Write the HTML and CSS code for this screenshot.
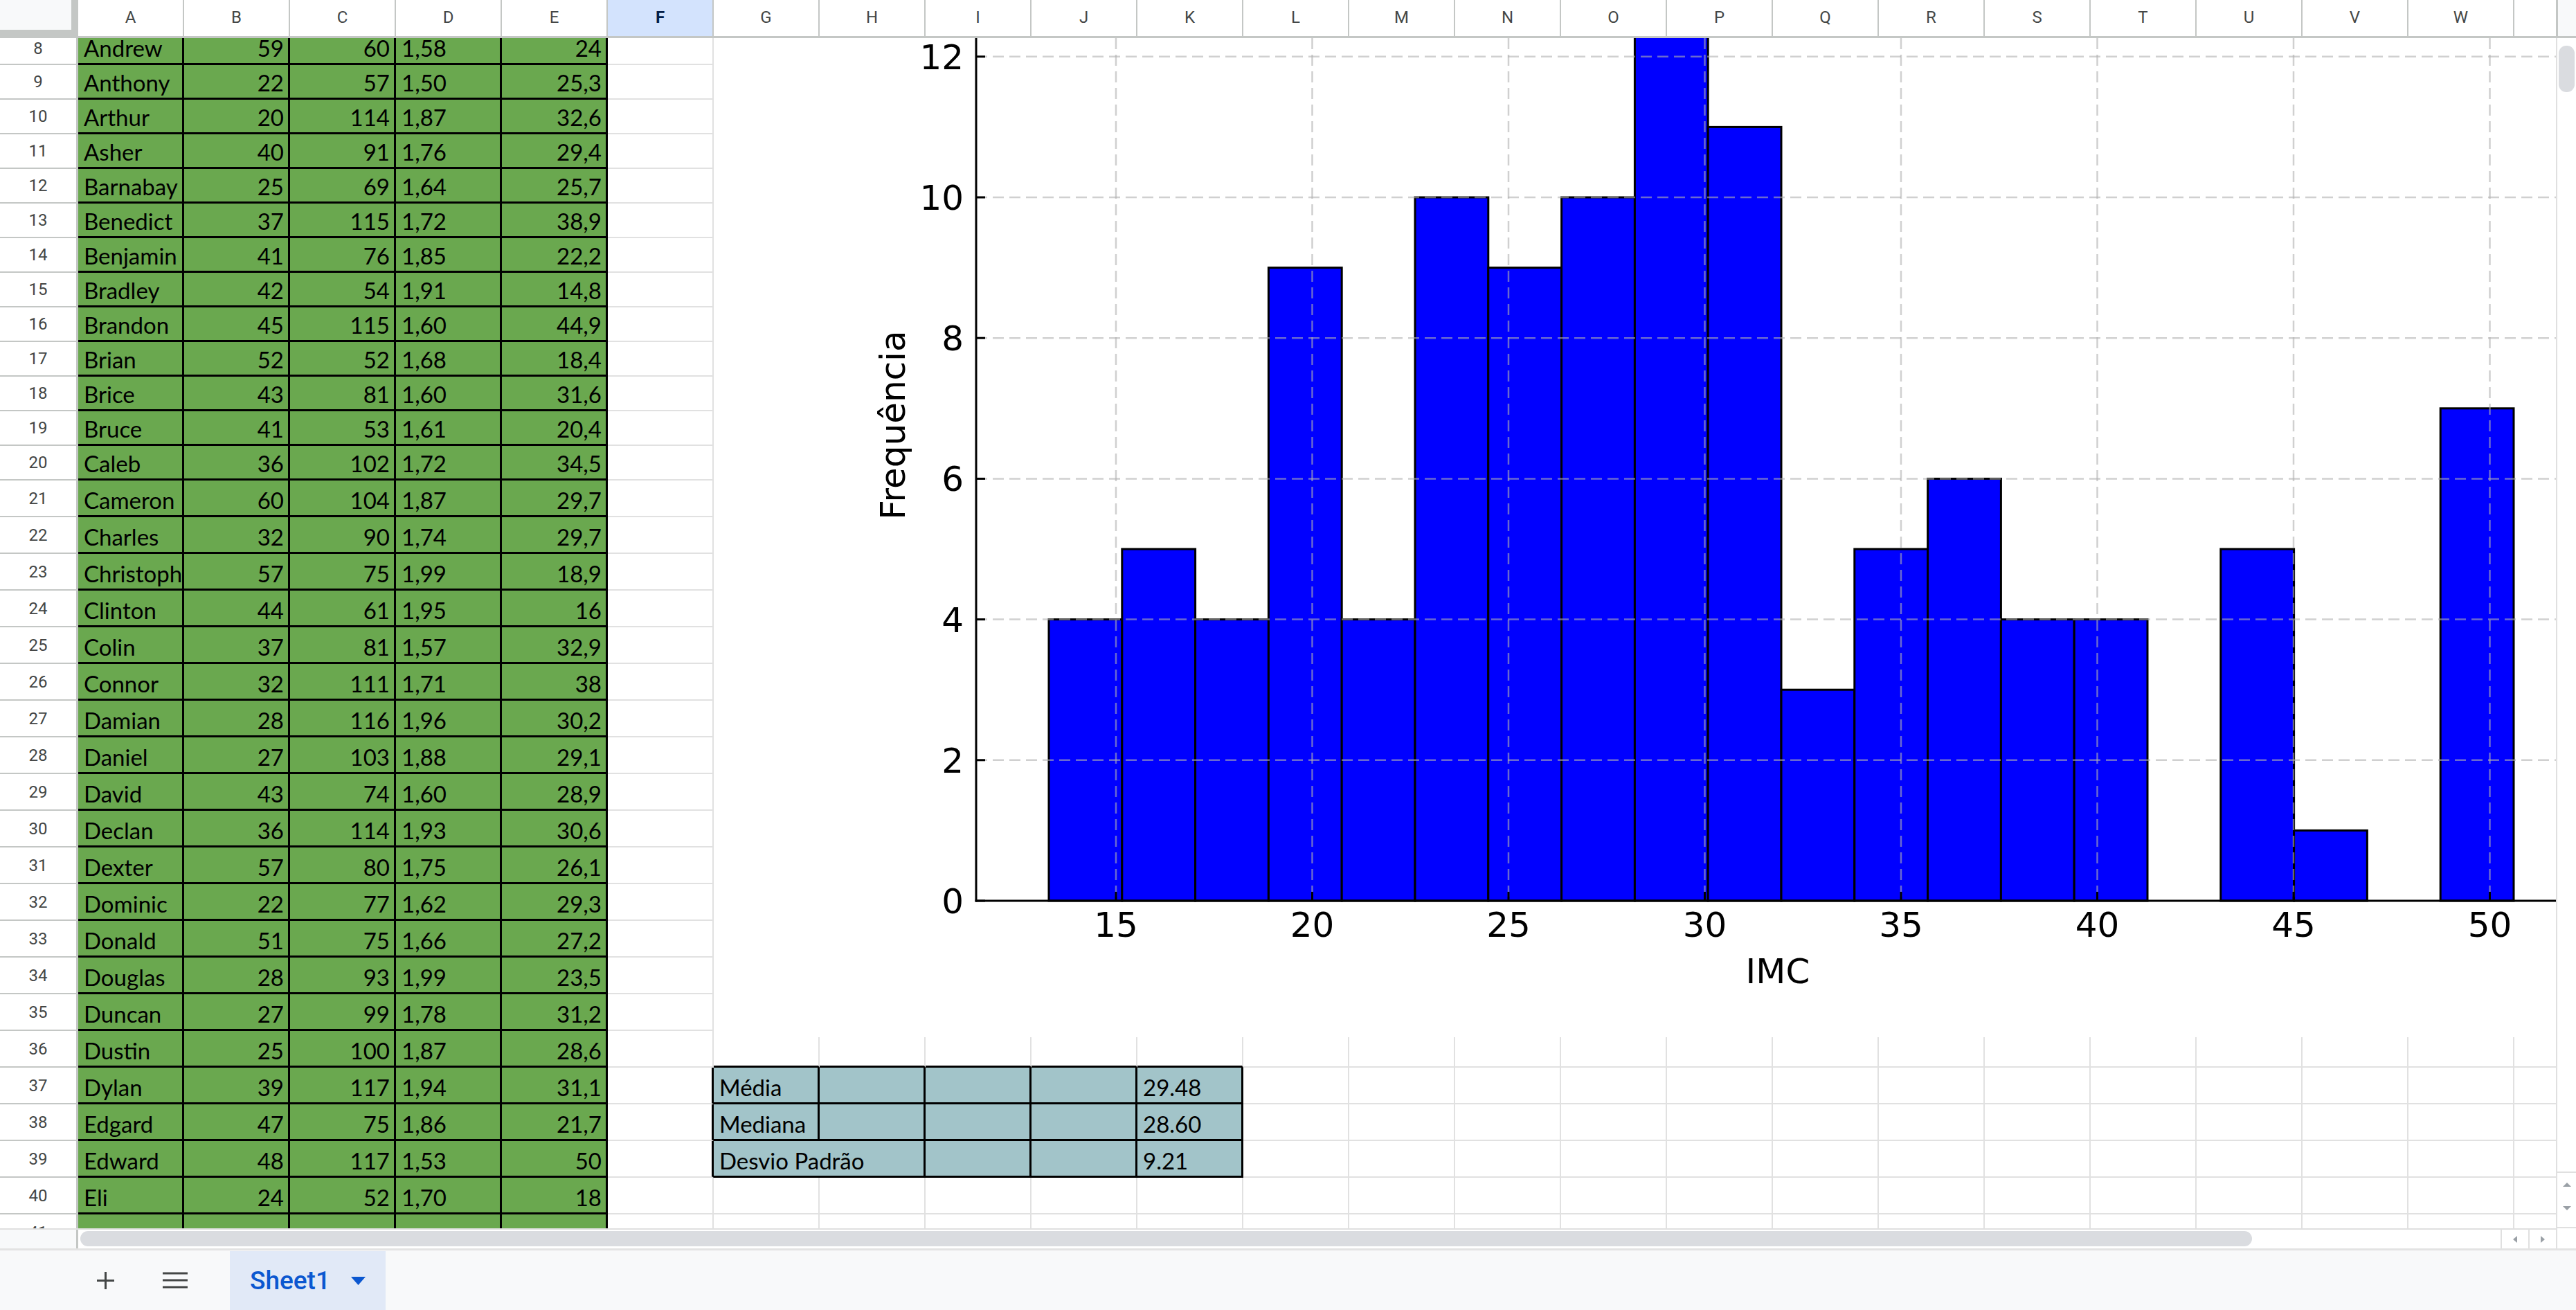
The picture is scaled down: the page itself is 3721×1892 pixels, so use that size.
FILE: index.html
```html
<!DOCTYPE html>
<html lang="pt">
<head>
<meta charset="utf-8">
<title>Sheet1</title>
<link rel="stylesheet" href="styles.css">
</head>
<body>
<div class="app">
  <div class="main">
    <div class="sheet">
      <div class="colheads">
        <div class="corner"></div>
        <div class="ch">A</div><div class="ch">B</div><div class="ch">C</div><div class="ch">D</div><div class="ch">E</div>
        <div class="ch sel">F</div><div class="ch">G</div><div class="ch">H</div><div class="ch">I</div><div class="ch">J</div>
        <div class="ch">K</div><div class="ch">L</div><div class="ch">M</div><div class="ch">N</div><div class="ch">O</div>
        <div class="ch">P</div><div class="ch">Q</div><div class="ch">R</div><div class="ch">S</div><div class="ch">T</div>
        <div class="ch">U</div><div class="ch">V</div><div class="ch">W</div><div class="ch x"></div>
      </div>
      <div class="rows">
        <div class="row first"><div class="rn">8</div><div class="c g">Andrew</div><div class="c g n">59</div><div class="c g n">60</div><div class="c g">1,58</div><div class="c g n">24</div><div class="c"></div><div class="rest"></div></div>
        <div class="row"><div class="rn">9</div><div class="c g">Anthony</div><div class="c g n">22</div><div class="c g n">57</div><div class="c g">1,50</div><div class="c g n">25,3</div><div class="c"></div><div class="rest"></div></div>
        <div class="row"><div class="rn">10</div><div class="c g">Arthur</div><div class="c g n">20</div><div class="c g n">114</div><div class="c g">1,87</div><div class="c g n">32,6</div><div class="c"></div><div class="rest"></div></div>
        <div class="row"><div class="rn">11</div><div class="c g">Asher</div><div class="c g n">40</div><div class="c g n">91</div><div class="c g">1,76</div><div class="c g n">29,4</div><div class="c"></div><div class="rest"></div></div>
        <div class="row"><div class="rn">12</div><div class="c g">Barnabay</div><div class="c g n">25</div><div class="c g n">69</div><div class="c g">1,64</div><div class="c g n">25,7</div><div class="c"></div><div class="rest"></div></div>
        <div class="row"><div class="rn">13</div><div class="c g">Benedict</div><div class="c g n">37</div><div class="c g n">115</div><div class="c g">1,72</div><div class="c g n">38,9</div><div class="c"></div><div class="rest"></div></div>
        <div class="row"><div class="rn">14</div><div class="c g">Benjamin</div><div class="c g n">41</div><div class="c g n">76</div><div class="c g">1,85</div><div class="c g n">22,2</div><div class="c"></div><div class="rest"></div></div>
        <div class="row"><div class="rn">15</div><div class="c g">Bradley</div><div class="c g n">42</div><div class="c g n">54</div><div class="c g">1,91</div><div class="c g n">14,8</div><div class="c"></div><div class="rest"></div></div>
        <div class="row"><div class="rn">16</div><div class="c g">Brandon</div><div class="c g n">45</div><div class="c g n">115</div><div class="c g">1,60</div><div class="c g n">44,9</div><div class="c"></div><div class="rest"></div></div>
        <div class="row"><div class="rn">17</div><div class="c g">Brian</div><div class="c g n">52</div><div class="c g n">52</div><div class="c g">1,68</div><div class="c g n">18,4</div><div class="c"></div><div class="rest"></div></div>
        <div class="row"><div class="rn">18</div><div class="c g">Brice</div><div class="c g n">43</div><div class="c g n">81</div><div class="c g">1,60</div><div class="c g n">31,6</div><div class="c"></div><div class="rest"></div></div>
        <div class="row"><div class="rn">19</div><div class="c g">Bruce</div><div class="c g n">41</div><div class="c g n">53</div><div class="c g">1,61</div><div class="c g n">20,4</div><div class="c"></div><div class="rest"></div></div>
        <div class="row"><div class="rn">20</div><div class="c g">Caleb</div><div class="c g n">36</div><div class="c g n">102</div><div class="c g">1,72</div><div class="c g n">34,5</div><div class="c"></div><div class="rest"></div></div>
        <div class="row t"><div class="rn">21</div><div class="c g">Cameron</div><div class="c g n">60</div><div class="c g n">104</div><div class="c g">1,87</div><div class="c g n">29,7</div><div class="c"></div><div class="rest"></div></div>
        <div class="row t"><div class="rn">22</div><div class="c g">Charles</div><div class="c g n">32</div><div class="c g n">90</div><div class="c g">1,74</div><div class="c g n">29,7</div><div class="c"></div><div class="rest"></div></div>
        <div class="row t"><div class="rn">23</div><div class="c g">Christopher</div><div class="c g n">57</div><div class="c g n">75</div><div class="c g">1,99</div><div class="c g n">18,9</div><div class="c"></div><div class="rest"></div></div>
        <div class="row t"><div class="rn">24</div><div class="c g">Clinton</div><div class="c g n">44</div><div class="c g n">61</div><div class="c g">1,95</div><div class="c g n">16</div><div class="c"></div><div class="rest"></div></div>
        <div class="row t"><div class="rn">25</div><div class="c g">Colin</div><div class="c g n">37</div><div class="c g n">81</div><div class="c g">1,57</div><div class="c g n">32,9</div><div class="c"></div><div class="rest"></div></div>
        <div class="row t"><div class="rn">26</div><div class="c g">Connor</div><div class="c g n">32</div><div class="c g n">111</div><div class="c g">1,71</div><div class="c g n">38</div><div class="c"></div><div class="rest"></div></div>
        <div class="row t"><div class="rn">27</div><div class="c g">Damian</div><div class="c g n">28</div><div class="c g n">116</div><div class="c g">1,96</div><div class="c g n">30,2</div><div class="c"></div><div class="rest"></div></div>
        <div class="row t"><div class="rn">28</div><div class="c g">Daniel</div><div class="c g n">27</div><div class="c g n">103</div><div class="c g">1,88</div><div class="c g n">29,1</div><div class="c"></div><div class="rest"></div></div>
        <div class="row t"><div class="rn">29</div><div class="c g">David</div><div class="c g n">43</div><div class="c g n">74</div><div class="c g">1,60</div><div class="c g n">28,9</div><div class="c"></div><div class="rest"></div></div>
        <div class="row t"><div class="rn">30</div><div class="c g">Declan</div><div class="c g n">36</div><div class="c g n">114</div><div class="c g">1,93</div><div class="c g n">30,6</div><div class="c"></div><div class="rest"></div></div>
        <div class="row t"><div class="rn">31</div><div class="c g">Dexter</div><div class="c g n">57</div><div class="c g n">80</div><div class="c g">1,75</div><div class="c g n">26,1</div><div class="c"></div><div class="rest"></div></div>
        <div class="row t"><div class="rn">32</div><div class="c g">Dominic</div><div class="c g n">22</div><div class="c g n">77</div><div class="c g">1,62</div><div class="c g n">29,3</div><div class="c"></div><div class="rest"></div></div>
        <div class="row t"><div class="rn">33</div><div class="c g">Donald</div><div class="c g n">51</div><div class="c g n">75</div><div class="c g">1,66</div><div class="c g n">27,2</div><div class="c"></div><div class="rest"></div></div>
        <div class="row t"><div class="rn">34</div><div class="c g">Douglas</div><div class="c g n">28</div><div class="c g n">93</div><div class="c g">1,99</div><div class="c g n">23,5</div><div class="c"></div><div class="rest"></div></div>
        <div class="row t"><div class="rn">35</div><div class="c g">Duncan</div><div class="c g n">27</div><div class="c g n">99</div><div class="c g">1,78</div><div class="c g n">31,2</div><div class="c"></div><div class="rest"></div></div>
        <div class="row t"><div class="rn">36</div><div class="c g">Dustin</div><div class="c g n">25</div><div class="c g n">100</div><div class="c g">1,87</div><div class="c g n">28,6</div><div class="c"></div><div class="c sb"></div><div class="c sb"></div><div class="c sb"></div><div class="c sb"></div><div class="c sb"></div><div class="rest"></div></div>
        <div class="row t"><div class="rn">37</div><div class="c g">Dylan</div><div class="c g n">39</div><div class="c g n">117</div><div class="c g">1,94</div><div class="c g n">31,1</div><div class="c fb"></div><div class="c s">Média</div><div class="c s"></div><div class="c s"></div><div class="c s"></div><div class="c s">29.48</div><div class="rest"></div></div>
        <div class="row t"><div class="rn">38</div><div class="c g">Edgard</div><div class="c g n">47</div><div class="c g n">75</div><div class="c g">1,86</div><div class="c g n">21,7</div><div class="c fb"></div><div class="c s">Mediana</div><div class="c s"></div><div class="c s"></div><div class="c s"></div><div class="c s">28.60</div><div class="rest"></div></div>
        <div class="row t"><div class="rn">39</div><div class="c g">Edward</div><div class="c g n">48</div><div class="c g n">117</div><div class="c g">1,53</div><div class="c g n">50</div><div class="c fb"></div><div class="c s w2">Desvio Padrão</div><div class="c s"></div><div class="c s"></div><div class="c s">9.21</div><div class="rest"></div></div>
        <div class="row t"><div class="rn">40</div><div class="c g">Eli</div><div class="c g n">24</div><div class="c g n">52</div><div class="c g">1,70</div><div class="c g n">18</div><div class="c"></div><div class="rest"></div></div>
        <div class="row t"><div class="rn">41</div><div class="c g"></div><div class="c g"></div><div class="c g"></div><div class="c g"></div><div class="c g"></div><div class="c"></div><div class="rest"></div></div>

        <div class="chart">
          <svg width="2661" height="1443" viewBox="0 0 2661 1443" xmlns="http://www.w3.org/2000/svg">
            <rect x="0" y="0" width="2661" height="1443" fill="#ffffff"/>
            <g fill="#0000ff" stroke="#000000" stroke-width="3">
              <rect x="484.0" y="839.6" width="105.8" height="406.4"/>
              <rect x="589.8" y="738.0" width="105.8" height="508"/>
              <rect x="695.6" y="839.6" width="105.8" height="406.4"/>
              <rect x="801.4" y="331.6" width="105.8" height="914.4"/>
              <rect x="907.2" y="839.6" width="105.8" height="406.4"/>
              <rect x="1013.0" y="230" width="105.8" height="1016"/>
              <rect x="1118.8" y="331.6" width="105.8" height="914.4"/>
              <rect x="1224.6" y="230" width="105.8" height="1016"/>
              <rect x="1330.4" y="-74.8" width="105.8" height="1320.8"/>
              <rect x="1436.2" y="128.4" width="105.8" height="1117.6"/>
              <rect x="1542.0" y="941.2" width="105.8" height="304.8"/>
              <rect x="1647.8" y="738.0" width="105.8" height="508"/>
              <rect x="1753.6" y="636.4" width="105.8" height="609.6"/>
              <rect x="1859.4" y="839.6" width="105.8" height="406.4"/>
              <rect x="1965.2" y="839.6" width="105.8" height="406.4"/>
              <rect x="2176.8" y="738.0" width="105.8" height="508"/>
              <rect x="2282.6" y="1144.4" width="105.8" height="101.6"/>
              <rect x="2494.2" y="534.8" width="105.8" height="711.2"/>
            </g>
            <g stroke="#b0b0b0" stroke-opacity="0.6" stroke-width="2.5" stroke-dasharray="16 8" fill="none">
              <line x1="581" y1="0" x2="581" y2="1246"/>
              <line x1="864.5" y1="0" x2="864.5" y2="1246"/>
              <line x1="1148" y1="0" x2="1148" y2="1246"/>
              <line x1="1431.5" y1="0" x2="1431.5" y2="1246"/>
              <line x1="1715" y1="0" x2="1715" y2="1246"/>
              <line x1="1998.5" y1="0" x2="1998.5" y2="1246"/>
              <line x1="2282" y1="0" x2="2282" y2="1246"/>
              <line x1="2565.5" y1="0" x2="2565.5" y2="1246"/>
              <line x1="379" y1="1042.8" x2="2661" y2="1042.8"/>
              <line x1="379" y1="839.6" x2="2661" y2="839.6"/>
              <line x1="379" y1="636.4" x2="2661" y2="636.4"/>
              <line x1="379" y1="433.2" x2="2661" y2="433.2"/>
              <line x1="379" y1="230" x2="2661" y2="230"/>
              <line x1="379" y1="26.8" x2="2661" y2="26.8"/>
            </g>
            <g stroke="#000000" stroke-width="3" fill="none">
              <line x1="379" y1="0" x2="379" y2="1247.5"/>
              <line x1="377.5" y1="1246" x2="2661" y2="1246"/>
              <line x1="379" y1="1246" x2="392" y2="1246"/>
              <line x1="379" y1="1042.8" x2="392" y2="1042.8"/>
              <line x1="379" y1="839.6" x2="392" y2="839.6"/>
              <line x1="379" y1="636.4" x2="392" y2="636.4"/>
              <line x1="379" y1="433.2" x2="392" y2="433.2"/>
              <line x1="379" y1="230" x2="392" y2="230"/>
              <line x1="379" y1="26.8" x2="392" y2="26.8"/>
              <line x1="581" y1="1246" x2="581" y2="1233"/>
              <line x1="864.5" y1="1246" x2="864.5" y2="1233"/>
              <line x1="1148" y1="1246" x2="1148" y2="1233"/>
              <line x1="1431.5" y1="1246" x2="1431.5" y2="1233"/>
              <line x1="1715" y1="1246" x2="1715" y2="1233"/>
              <line x1="1998.5" y1="1246" x2="1998.5" y2="1233"/>
              <line x1="2282" y1="1246" x2="2282" y2="1233"/>
              <line x1="2565.5" y1="1246" x2="2565.5" y2="1233"/>
            </g>
            <g class="tick" text-anchor="end">
              <text x="361" y="1264">0</text>
              <text x="361" y="1060.8">2</text>
              <text x="361" y="857.6">4</text>
              <text x="361" y="654.4">6</text>
              <text x="361" y="451.2">8</text>
              <text x="361" y="248">10</text>
              <text x="361" y="44.8">12</text>
            </g>
            <g class="tick" text-anchor="middle">
              <text x="581" y="1298">15</text>
              <text x="864.5" y="1298">20</text>
              <text x="1148" y="1298">25</text>
              <text x="1431.5" y="1298">30</text>
              <text x="1715" y="1298">35</text>
              <text x="1998.5" y="1298">40</text>
              <text x="2282" y="1298">45</text>
              <text x="2565.5" y="1298">50</text>
            </g>
            <text class="tick" x="1537" y="1365" text-anchor="middle">IMC</text>
            <text class="tick" x="0" y="0" text-anchor="middle" transform="translate(276 559) rotate(-90)">Frequência</text>
          </svg>
        </div>
      </div>
      <div class="hscroll">
        <div class="hs-corner"></div>
        <div class="hs-track"><div class="hs-thumb"></div></div>
        <div class="hs-btn"><svg width="12" height="12" viewBox="0 0 12 12"><path d="M9 1 L3 6 L9 11 Z" fill="#9aa0a6"/></svg></div>
        <div class="hs-btn"><svg width="12" height="12" viewBox="0 0 12 12"><path d="M3 1 L9 6 L3 11 Z" fill="#9aa0a6"/></svg></div>
      </div>
    </div>
    <div class="vbar">
      <div class="vbar-head"></div>
      <div class="vbar-track">
        <div class="vbar-thumb"></div>
        <div class="vbar-space"></div>
        <div class="vbar-arrows">
          <svg width="14" height="8" viewBox="0 0 14 8"><path d="M1 7 L7 1 L13 7 Z" fill="#9aa0a6"/></svg>
          <svg width="14" height="8" viewBox="0 0 14 8"><path d="M1 1 L7 7 L13 1 Z" fill="#9aa0a6"/></svg>
        </div>
      </div>
      <div class="vbar-foot"></div>
    </div>
  </div>
  <div class="tabbar">
    <div class="tb-icon plus"><svg width="27" height="27" viewBox="0 0 27 27"><path d="M13.5 1 V26 M1 13.5 H26" stroke="#444746" stroke-width="3" fill="none"/></svg></div>
    <div class="tb-icon menu"><svg width="36" height="24" viewBox="0 0 36 24"><path d="M0 2 H36 M0 12 H36 M0 22 H36" stroke="#444746" stroke-width="3" fill="none"/></svg></div>
    <div class="tab">
      <span class="tab-name">Sheet1</span>
      <svg class="tab-caret" width="21" height="12" viewBox="0 0 21 12"><path d="M0 0 H21 L10.5 12 Z" fill="#0b57d0"/></svg>
    </div>
  </div>
</div>
</body>
</html>
```

FILE: styles.css
```css
html, body {
  margin: 0;
  padding: 0;
  background: #ffffff;
}

body {
  width: 3721px;
  height: 1892px;
  overflow: hidden;
  font-family: Lato, "Open Sans", sans-serif;
}

.app {
  width: 3721px;
  height: 1892px;
  display: flex;
  flex-direction: column;
}

.main {
  height: 1803px;
  display: flex;
  flex: none;
}

.sheet {
  width: 3692px;
  flex: none;
  display: flex;
  flex-direction: column;
  overflow: hidden;
}

/* column headers */
.colheads {
  height: 55px;
  flex: none;
  display: flex;
}

.corner {
  width: 113px;
  flex: none;
  box-sizing: border-box;
  background: #f8f9fa;
  border-right: 10px solid #c4c7c5;
  border-bottom: 12px solid #c4c7c5;
}

.ch {
  width: 153px;
  flex: none;
  box-sizing: border-box;
  border-right: 2px solid #c4c7c5;
  border-bottom: 3px solid #c4c7c5;
  background: #ffffff;
  display: flex;
  align-items: center;
  justify-content: center;
  padding-bottom: 3px;
  font-family: Roboto, "Liberation Sans", sans-serif;
  font-size: 24px;
  color: #444746;
}

.ch.sel {
  background: #d3e3fd;
  color: #041e49;
  font-weight: 700;
}

.ch.x {
  flex: 1;
  width: auto;
  border-right: none;
}

/* rows */
.rows {
  flex: 1;
  position: relative;
  overflow: hidden;
}

.row {
  display: flex;
  height: 50px;
}

.row.first {
  height: 39px;
}

.row.t {
  height: 53px;
}

.rn {
  width: 113px;
  flex: none;
  box-sizing: border-box;
  border-right: 3px solid #c4c7c5;
  border-bottom: 2px solid #c4c7c5;
  display: flex;
  align-items: center;
  justify-content: center;
  font-family: Roboto, "Liberation Sans", sans-serif;
  font-size: 24px;
  color: #444746;
  background: #ffffff;
}

.row.first .rn {
  align-items: flex-start;
  padding-top: 1px;
}

.c {
  width: 153px;
  flex: none;
  box-sizing: border-box;
  border-right: 2px solid #e1e1e1;
  border-bottom: 2px solid #e1e1e1;
  display: flex;
  align-items: flex-end;
  padding: 0 6px 6px 8px;
  overflow: hidden;
  white-space: nowrap;
  font-size: 33px;
  line-height: 0.9;
  color: #000000;
}

.c.g {
  background: #6aa84f;
  border-right: 3px solid #000000;
  border-bottom: 3px solid #000000;
}

.c.n {
  justify-content: flex-end;
}

.c.sb {
  border-bottom: 3px solid #000000;
}

.c.fb {
  border-right: 3px solid #000000;
}

.c.s {
  background: #a2c4c9;
  border-right: 3px solid #000000;
  border-bottom: 3px solid #000000;
}

.c.w2 {
  width: 306px;
}

.rest {
  flex: 1;
  box-sizing: border-box;
  border-bottom: 2px solid #e1e1e1;
  background: repeating-linear-gradient(to right, transparent 0, transparent 151px, #e1e1e1 151px, #e1e1e1 153px);
}

/* chart overlay */
.chart {
  position: absolute;
  left: 1031px;
  top: 0;
  width: 2661px;
  height: 1443px;
  background: #ffffff;
}

.chart svg {
  display: block;
}

.tick {
  font-family: "DejaVu Sans", sans-serif;
  font-size: 50px;
  fill: #000000;
}

/* horizontal scroll */
.hscroll {
  height: 29px;
  flex: none;
  display: flex;
  box-sizing: border-box;
  border-top: 2px solid #e0e0e0;
  background: #ffffff;
}

.hs-corner {
  width: 113px;
  flex: none;
  box-sizing: border-box;
  background: #f8f9fa;
  border-right: 3px solid #c4c7c5;
}

.hs-track {
  flex: 1;
  padding: 2px 6px 3px 3px;
  display: flex;
}

.hs-thumb {
  width: 3137px;
  height: 22px;
  border-radius: 11px;
  background: #dadce0;
}

.hs-btn {
  width: 40px;
  flex: none;
  box-sizing: border-box;
  border-left: 2px solid #e0e0e0;
  display: flex;
  align-items: center;
  justify-content: center;
}

/* vertical scroll */
.vbar {
  width: 29px;
  flex: none;
  display: flex;
  flex-direction: column;
}

.vbar-head {
  height: 55px;
  flex: none;
  box-sizing: border-box;
  border-left: 3px solid #c4c7c5;
  border-bottom: 3px solid #c4c7c5;
  background: #f8f9fa;
}

.vbar-track {
  flex: 1;
  box-sizing: border-box;
  border-left: 2px solid #e0e0e0;
  display: flex;
  flex-direction: column;
  background: #ffffff;
}

.vbar-thumb {
  width: 23px;
  height: 67px;
  margin: 11px 0 0 2px;
  border-radius: 11px;
  background: #dadce0;
  flex: none;
}

.vbar-space {
  flex: 1;
}

.vbar-arrows {
  height: 80px;
  flex: none;
  display: flex;
  flex-direction: column;
  align-items: center;
  justify-content: space-around;
  padding-bottom: 10px;
  box-sizing: border-box;
  border-top: 2px solid #e0e0e0;
}

.vbar-foot {
  height: 29px;
  flex: none;
  background: #ffffff;
  border-left: 2px solid #e0e0e0;
  border-top: 2px solid #e0e0e0;
}

/* tab bar */
.tabbar {
  flex: 1;
  display: flex;
  align-items: stretch;
  background: #f8f9fa;
  border-top: 3px solid #e3e3e3;
  padding-left: 139px;
  box-sizing: border-box;
}

.tb-icon {
  display: flex;
  align-items: center;
}

.tb-icon.plus {
  width: 27px;
  margin-right: 69px;
}

.tb-icon.menu {
  width: 36px;
  margin-right: 61px;
}

.tab {
  margin-top: 1px;
  width: 225px;
  box-sizing: border-box;
  padding: 0 29px;
  background: #e1e9f7;
  display: flex;
  align-items: center;
  justify-content: space-between;
}

.tab-name {
  font-family: Roboto, "Liberation Sans", sans-serif;
  font-weight: 500;
  font-size: 37px;
  color: #0b57d0;
}
```
